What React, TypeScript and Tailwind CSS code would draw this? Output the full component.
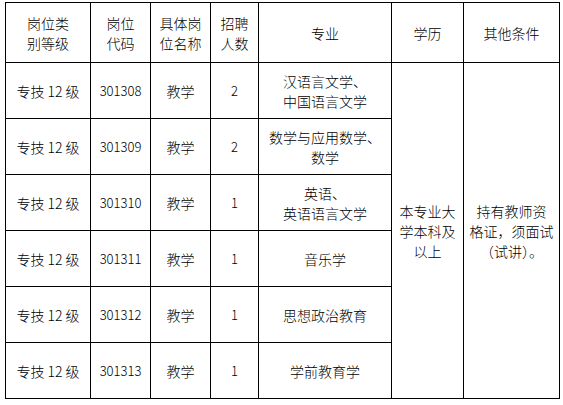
import React from "react";

const rows = [
  { code: "301308", n: "2", major: ["汉语言文学、", "中国语言文学"] },
  { code: "301309", n: "2", major: ["数学与应用数学、", "数学"] },
  { code: "301310", n: "1", major: ["英语、", "英语语言文学"] },
  { code: "301311", n: "1", major: ["音乐学"] },
  { code: "301312", n: "1", major: ["思想政治教育"] },
  { code: "301313", n: "1", major: ["学前教育学"] },
];

const cell = "border border-black p-0 text-center align-middle font-light";

export default function App() {
  return (
    <div
      className="w-[563px] h-[405px] bg-white text-black pt-[2px] pl-[5px]"
      style={{ fontFamily: '"Noto Sans CJK SC", "Noto Sans", sans-serif' }}
    >
      <table className="table-fixed border-collapse w-[554px] text-[14px] leading-[20px]">
        <colgroup>
          <col className="w-[85px]" />
          <col className="w-[60px]" />
          <col className="w-[60px]" />
          <col className="w-[48px]" />
          <col className="w-[133px]" />
          <col className="w-[72px]" />
          <col className="w-[96px]" />
        </colgroup>
        <thead>
          <tr className="h-[60px]">
            <th className={cell}>岗位类<br />别等级</th>
            <th className={cell}>岗位<br />代码</th>
            <th className={cell}>具体岗<br />位名称</th>
            <th className={cell}>招聘<br />人数</th>
            <th className={cell}>专业</th>
            <th className={cell}>学历</th>
            <th className={cell}>其他条件</th>
          </tr>
        </thead>
        <tbody>
          {rows.map((r, i) => (
            <tr key={r.code} className="h-[56px]">
              <td className={cell}>专技 12 级</td>
              <td className={`${cell} text-[13px]`}>{r.code}</td>
              <td className={cell}>教学</td>
              <td className={`${cell} text-[13px]`}>{r.n}</td>
              <td className={cell}>
                {r.major.map((m, j) => (
                  <div key={j}>{m}</div>
                ))}
              </td>
              {i === 0 && (
                <>
                  <td className={cell} rowSpan={6}>
                    本专业大<br />学本科及<br />以上
                  </td>
                  <td className={cell} rowSpan={6}>
                    持有教师资<br />格证，须面试<br />（试讲）。
                  </td>
                </>
              )}
            </tr>
          ))}
        </tbody>
      </table>
    </div>
  );
}
